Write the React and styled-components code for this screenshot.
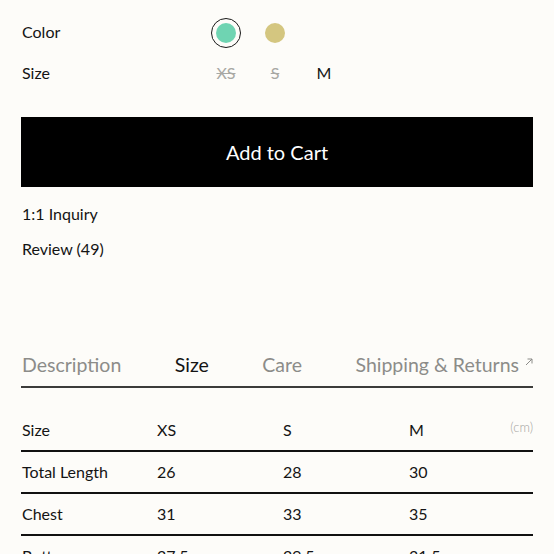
import styled, { createGlobalStyle } from 'styled-components';

const GlobalStyle = createGlobalStyle`
  html, body {
    margin: 0;
    padding: 0;
    background: #fdfcf9;
  }
  body {
    font-family: 'Lato', 'Liberation Sans', sans-serif;
    color: #141414;
  }
`;

const Page = styled.div`
  width: 554px;
  height: 554px;
  overflow: hidden;
  box-sizing: border-box;
  padding: 12px 21px 0 21px;
`;

const OptionRow = styled.div`
  display: grid;
  grid-template-columns: 190px 1fr;
  align-items: center;
  height: 41px;
`;

const OptionLabel = styled.span`
  font-size: 16px;
  padding-left: 1px;
  margin-top: -2px;
`;

const OptionValues = styled.div`
  display: flex;
  gap: 19px;
  align-items: center;
`;

const SwatchBox = styled.button`
  width: 30px;
  height: 30px;
  box-sizing: border-box;
  border-radius: 50%;
  border: 1.5px solid ${(p) => (p.$selected ? '#1a1a1a' : 'transparent')};
  background: transparent;
  padding: 0;
  display: flex;
  align-items: center;
  justify-content: center;
  cursor: pointer;
`;

const Swatch = styled.span`
  width: 20px;
  height: 20px;
  border-radius: 50%;
  background: ${(p) => p.$color};
`;

const SizeOption = styled.span`
  width: 30px;
  text-align: center;
  font-size: 16px;
  margin-top: -2px;
  color: ${(p) => (p.$soldOut ? '#a8a8a4' : '#141414')};
  text-decoration: ${(p) => (p.$soldOut ? 'line-through' : 'none')};
`;

const CartButton = styled.button`
  display: block;
  width: 100%;
  height: 70px;
  margin-top: 23px;
  border: none;
  background: #000;
  color: #fff;
  font-family: inherit;
  font-size: 20px;
  font-weight: 400;
  padding-bottom: 1px;
  cursor: pointer;
`;

const LinkList = styled.div`
  margin-top: 9px;
  display: flex;
  flex-direction: column;
`;

const TextLink = styled.a`
  line-height: 35px;
  font-size: 16px;
  color: #141414;
  text-decoration: none;
  padding-left: 1px;
`;

const Tabs = styled.div`
  margin-top: 80px;
  height: 42px;
  box-sizing: border-box;
  padding-bottom: 4px;
  display: flex;
  justify-content: space-between;
  align-items: center;
  border-bottom: 2px solid #3c3c3a;
`;

const Tab = styled.span`
  font-size: 19.5px;
  color: ${(p) => (p.$active ? '#141414' : '#8c8c89')};
  padding-left: 1px;
  display: flex;
  align-items: flex-start;
  gap: 6px;
`;

const Table = styled.div`
  margin-top: 22px;
`;

const Row = styled.div`
  display: grid;
  grid-template-columns: 135px 126px 126px 1fr auto;
  align-items: center;
  height: 42px;
  box-sizing: border-box;
  padding-bottom: 1px;
  border-bottom: 2px solid #111;
  font-size: 16px;
`;

const Cell = styled.span`
  padding-left: 1px;
`;

const Unit = styled.span`
  font-size: 13px;
  color: #a5a5a1;
  font-weight: 300;
  align-self: start;
  margin-top: 9px;
`;

const sizes = ['XS', 'S', 'M'];
const rows = [
  ['Total Length', '26', '28', '30'],
  ['Chest', '31', '33', '35'],
  ['Bottom', '27.5', '29.5', '31.5'],
];

export default function App() {
  return (
    <Page>
      <GlobalStyle />
      <OptionRow>
        <OptionLabel>Color</OptionLabel>
        <OptionValues>
          <SwatchBox $selected>
            <Swatch $color="#6fd4b2" />
          </SwatchBox>
          <SwatchBox>
            <Swatch $color="#d4c680" />
          </SwatchBox>
        </OptionValues>
      </OptionRow>
      <OptionRow>
        <OptionLabel>Size</OptionLabel>
        <OptionValues>
          <SizeOption $soldOut>XS</SizeOption>
          <SizeOption $soldOut>S</SizeOption>
          <SizeOption>M</SizeOption>
        </OptionValues>
      </OptionRow>

      <CartButton>Add to Cart</CartButton>

      <LinkList>
        <TextLink href="#">1:1 Inquiry</TextLink>
        <TextLink href="#">Review (49)</TextLink>
      </LinkList>

      <Tabs>
        <Tab>Description</Tab>
        <Tab $active>Size</Tab>
        <Tab>Care</Tab>
        <Tab>
          Shipping &amp; Returns
          <svg width="8" height="8" viewBox="0 0 8 8" style={{ marginTop: 5 }}>
            <path d="M1 7 L7 1 M2.5 1 H7 V5.5" stroke="#8c8c89" strokeWidth="1" fill="none" />
          </svg>
        </Tab>
      </Tabs>

      <Table>
        <Row>
          <Cell>Size</Cell>
          {sizes.map((s) => (
            <Cell key={s}>{s}</Cell>
          ))}
          <Unit>(cm)</Unit>
        </Row>
        {rows.map((r) => (
          <Row key={r[0]}>
            {r.map((c, i) => (
              <Cell key={i}>{c}</Cell>
            ))}
            <span />
          </Row>
        ))}
      </Table>
    </Page>
  );
}
